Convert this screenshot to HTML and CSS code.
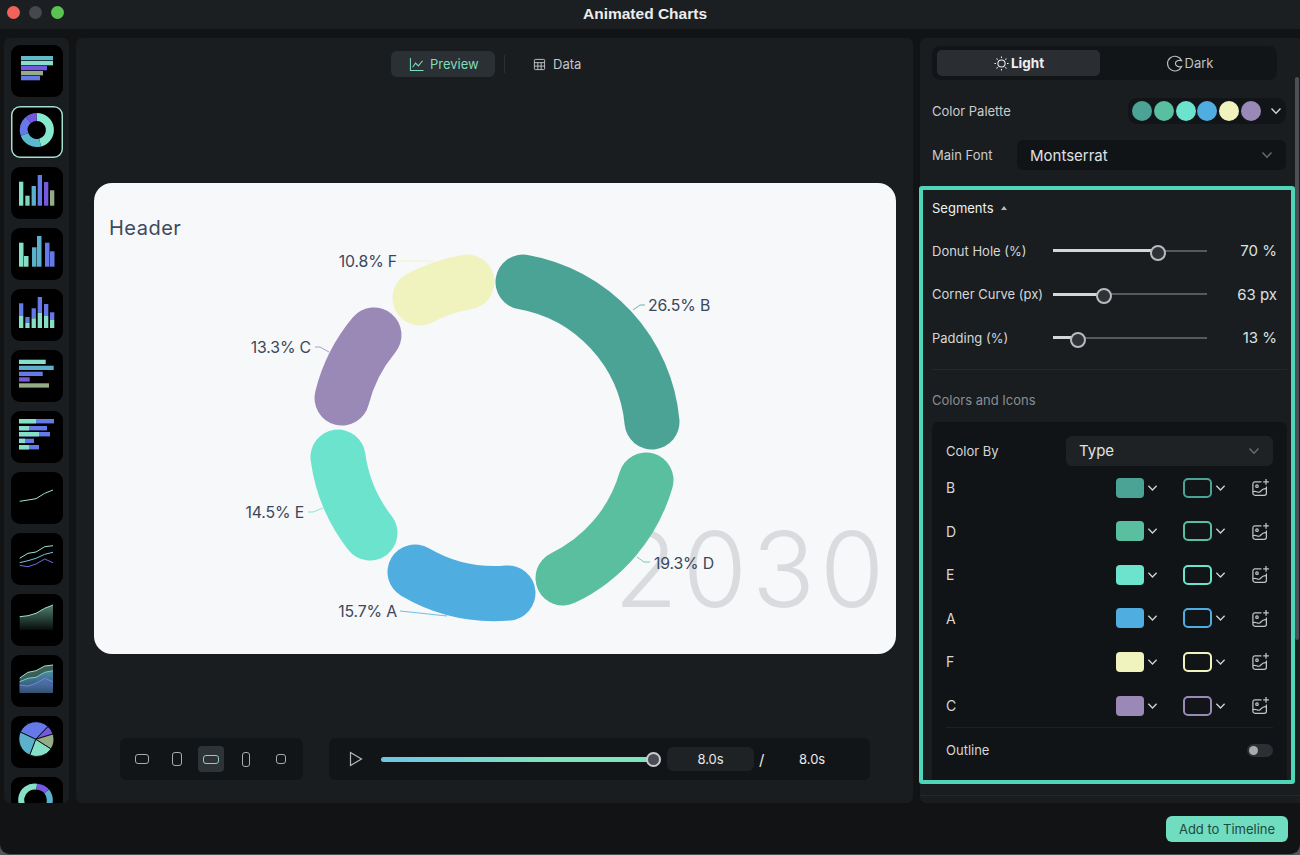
FILE: index.html
```html
<!DOCTYPE html>
<html lang="en">
<head>
<meta charset="utf-8">
<title>Animated Charts</title>
<link rel="stylesheet" href="styles.css">
</head>
<body>
<svg class="defs" aria-hidden="true">
  <symbol id="chev" viewBox="0 0 12 8"><path d="M1.5 1.5L6 6.2L10.5 1.5" fill="none" stroke="currentColor" stroke-width="1.4"/></symbol>
  <symbol id="addimg" viewBox="0 0 20 20"><g fill="none" stroke="currentColor" stroke-width="1.3"><path d="M11 4H4.2A2.2 2.2 0 0 0 2 6.2V16A2.2 2.2 0 0 0 4.2 18.2H14A2.2 2.2 0 0 0 16.2 16V9"/><path d="M15.8 1V7M12.8 4H18.8"/><circle cx="6.3" cy="8.6" r="1.3"/><path d="M2 14.5C5 12.5 7 16.5 9.5 14.5C11.5 12.5 13 10.5 16.2 11.5"/></g></symbol>
</svg>
<div class="app">
  <header class="titlebar">
    <div class="lights"><span class="light red"></span><span class="light grey"></span><span class="light green"></span></div>
    <div class="apptitle">Animated Charts</div>
  </header>
  <div class="workspace">
    <aside class="sidebar">
      <div class="thumb"><svg viewBox="0 0 52 52"><rect x="10" y="11" width="32" height="4.3" fill="#62b9c9"/><rect x="10" y="16" width="32" height="4.3" fill="#86e0c8"/><rect x="10" y="21" width="26" height="4.3" fill="#7558e0"/><rect x="10" y="26" width="22" height="4.3" fill="#94ad86"/><rect x="10" y="31" width="19" height="4.3" fill="#6679e8"/></svg></div>
      <div class="thumb selected"><svg viewBox="0 0 52 52"><g fill="none" stroke-width="8"><path d="M25.7 11A13 13 0 0 1 29.1 36.6" stroke="#86e8cc"/><path d="M29.1 36.6A13 13 0 0 1 13.5 28.4" stroke="#5bb9cf"/><path d="M13.5 28.4A13 13 0 0 1 17.3 14" stroke="#6679e8"/><path d="M17.3 14A13 13 0 0 1 25.7 11" stroke="#7558e0"/></g></svg></div>
      <div class="thumb"><svg viewBox="0 0 52 52"><rect x="8" y="14.7" width="4.3" height="24" fill="#86e0c8"/><rect x="14.3" y="28.7" width="4.3" height="10" fill="#7fd6b8"/><rect x="20.6" y="19" width="4.3" height="19.7" fill="#5bb0cc"/><rect x="26.7" y="8" width="4.3" height="30.7" fill="#6679e8"/><rect x="33" y="15" width="4.3" height="23.7" fill="#7558e0"/><rect x="39" y="23.3" width="4.3" height="15.4" fill="#94ad86"/></svg></div>
      <div class="thumb"><svg viewBox="0 0 52 52"><rect x="8" y="14.7" width="4.5" height="24" fill="#86e0c8"/><rect x="13" y="28" width="4.5" height="10.7" fill="#86e0c8"/><rect x="21" y="19.3" width="4.5" height="19.4" fill="#5bb0cc"/><rect x="26" y="8" width="4.5" height="30.7" fill="#5bb0cc"/><rect x="34" y="14.7" width="4.5" height="24" fill="#6679e8"/><rect x="39" y="23.3" width="4.5" height="15.4" fill="#6679e8"/></svg></div>
      <div class="thumb"><svg viewBox="0 0 52 52"><g fill="#6679e8"><rect x="8" y="14.3" width="4.3" height="12.7"/><rect x="14.3" y="28" width="4.3" height="5.7"/><rect x="20.6" y="19.3" width="4.3" height="10"/><rect x="26.7" y="8" width="4.3" height="15.7"/><rect x="33" y="15" width="4.3" height="12"/><rect x="39" y="23.3" width="4.3" height="7.7"/></g><g fill="#86e0c8"><rect x="8" y="27" width="4.3" height="12"/><rect x="14.3" y="33.7" width="4.3" height="5.3"/><rect x="20.6" y="29.3" width="4.3" height="9.7"/><rect x="26.7" y="23.7" width="4.3" height="15.3"/><rect x="33" y="27" width="4.3" height="12"/><rect x="39" y="31" width="4.3" height="8"/></g></svg></div>
      <div class="thumb"><svg viewBox="0 0 52 52"><rect x="8" y="9.7" width="26.7" height="4.3" fill="#86e0c8"/><rect x="8" y="15.7" width="34.7" height="4.3" fill="#5bb0cc"/><rect x="8" y="21.7" width="23.7" height="4.3" fill="#6679e8"/><rect x="8" y="27.3" width="10.7" height="4.3" fill="#7558e0"/><rect x="8" y="33.3" width="30" height="4.3" fill="#94ad86"/></svg></div>
      <div class="thumb"><svg viewBox="0 0 52 52"><g fill="#6679e8"><rect x="8" y="8" width="35" height="4.4"/><rect x="8" y="15" width="28" height="4.4"/><rect x="8" y="21" width="31" height="4.4"/><rect x="8" y="27.7" width="15" height="4.4"/><rect x="8" y="34" width="20" height="4.4"/></g><g fill="#86e0c8"><rect x="8" y="8" width="17" height="4.4"/><rect x="8" y="15" width="10" height="4.4"/><rect x="8" y="21" width="20" height="4.4"/><rect x="8" y="27.7" width="6" height="4.4"/><rect x="8" y="34" width="10" height="4.4"/></g></svg></div>
      <div class="thumb"><svg viewBox="0 0 52 52"><path d="M8.7 29.3L17 28L25 26.7L33.7 21.3L42 18" fill="none" stroke="#a5e0cc" stroke-width="1"/></svg></div>
      <div class="thumb"><svg viewBox="0 0 52 52"><g fill="none" stroke-width="1"><path d="M8.7 25.3L17 20.3L25 19L33.7 13.7L42 12.7" stroke="#9fe0cc"/><path d="M8.7 29.7L17 27.7L25 25.3L33.7 21.3L42 19.3" stroke="#7cc4dc"/><path d="M8.7 32.3L17 33.7L25 31L33.7 26L42 29.7" stroke="#6a6fe0"/></g></svg></div>
      <div class="thumb"><svg viewBox="0 0 52 52"><defs><linearGradient id="ga" x1="0" y1="0" x2="0" y2="1"><stop offset="0" stop-color="#4f7f70"/><stop offset="1" stop-color="#4f7f70" stop-opacity="0.1"/></linearGradient></defs><path d="M8.7 22.7L17 21.7L25 19.3L33.7 14.3L42 11V36H8.7Z" fill="url(#ga)"/><path d="M8.7 22.7L17 21.7L25 19.3L33.7 14.3L42 11" fill="none" stroke="#9fe0cc" stroke-width="1"/></svg></div>
      <div class="thumb"><svg viewBox="0 0 52 52"><defs><linearGradient id="gb" x1="0" y1="0" x2="0" y2="1"><stop offset="0" stop-color="#4d6fae"/><stop offset="1" stop-color="#4d6fae" stop-opacity="0.1"/></linearGradient><linearGradient id="gc" x1="0" y1="0" x2="0" y2="1"><stop offset="0" stop-color="#4b8ea5"/><stop offset="1" stop-color="#2e4a66"/></linearGradient></defs><path d="M8.7 23L17 17.3L25 15.7L33.7 11L42 10V38H8.7Z" fill="#3a5f55"/><path d="M8.7 26.7L17 23.3L25 22.3L33.7 17.3L42 15.7V38H8.7Z" fill="url(#gc)"/><path d="M8.7 30L17 31L25 28.3L33.7 23.3L42 26.7V38H8.7Z" fill="url(#gb)"/><g fill="none" stroke-width="1"><path d="M8.7 23L17 17.3L25 15.7L33.7 11L42 10" stroke="#9fe0cc"/><path d="M8.7 26.7L17 23.3L25 22.3L33.7 17.3L42 15.7" stroke="#7cc4dc"/><path d="M8.7 30L17 31L25 28.3L33.7 23.3L42 26.7" stroke="#7a7fe8"/></g></svg></div>
      <div class="thumb"><svg viewBox="0 0 52 52"><g stroke="#000" stroke-width="0.8"><path d="M24.7 23.3L9.3 16A17.3 17.3 0 0 1 37 10.5Z" fill="#6679e8"/><path d="M24.7 23.3L37 10.5A17.3 17.3 0 0 1 42 18Z" fill="#7558e0"/><path d="M24.7 23.3L42 18A17.3 17.3 0 0 1 40 33Z" fill="#94ad86"/><path d="M24.7 23.3L40 33A17.3 17.3 0 0 1 18.7 39Z" fill="#86e0c8"/><path d="M24.7 23.3L18.7 39A17.3 17.3 0 0 1 9.3 16Z" fill="#5bb0cc"/></g></svg></div>
      <div class="thumb"><svg viewBox="0 0 52 52"><g fill="none" stroke-width="6"><path d="M21.3 35.9A13 13 0 0 1 25.7 9.7" stroke="#86e0c8"/><path d="M25.7 9.7A14 14 0 0 1 35.7 14.3" stroke="#7558e0"/><path d="M35.7 14.3A14 14 0 0 1 32.2 35" stroke="#5bb0cc"/></g></svg></div>
    </aside>

    <main class="stage">
      <nav class="tabs">
        <div class="tab active"><svg class="tabicon" viewBox="0 0 16 16"><path d="M1.5 1V14.5H15.5M3.8 11L7 6.5L10 9.5L14.5 4" fill="none" stroke="currentColor" stroke-width="1.1"/></svg>Preview</div>
        <span class="tabdiv"></span>
        <div class="tab"><svg class="tabicon small" viewBox="0 0 14 14"><path d="M2.5 1.5H11.5A1 1 0 0 1 12.5 2.5V11.5A1 1 0 0 1 11.5 12.5H2.5A1 1 0 0 1 1.5 11.5V2.5A1 1 0 0 1 2.5 1.5ZM1.5 5H12.5M1.5 8.7H12.5M5.2 5V12.5M8.8 5V12.5" fill="none" stroke="currentColor" stroke-width="1"/></svg>Data</div>
      </nav>

      <section class="card">
        <svg class="chart" viewBox="0 0 802 471">
          <text class="year" x="520" y="424">2030</text>
          <text class="header" x="15" y="52">Header</text>
          <g fill="none" stroke-width="55" stroke-linecap="round">
            <path d="M429 99A157 157 0 0 1 558 239" stroke="#4ba396"/>
            <path d="M552 297A157 157 0 0 1 469 395" stroke="#5abf9e"/>
            <path d="M414 410A157 157 0 0 1 321 389" stroke="#4fade0"/>
            <path d="M276 350A157 157 0 0 1 244 274" stroke="#6be3cd"/>
            <path d="M248 215A157 157 0 0 1 280 152" stroke="#9a88b6"/>
            <path d="M326 115A157 157 0 0 1 373 99" stroke="#f0f3be"/>
          </g>
          <g fill="none" stroke-width="0.8">
            <path d="M539 127L546 122H551" stroke="#4ba396"/>
            <path d="M543 374L550 379H556" stroke="#5abf9e"/>
            <path d="M306 428L353 433" stroke="#4fade0"/>
            <path d="M214 329H219L229 325" stroke="#6be3cd"/>
            <path d="M221 164H226L235 169" stroke="#9a88b6"/>
            <path d="M303 78H339" stroke="#f0f3be"/>
          </g>
          <text class="label" x="554" y="128">26.5% B</text>
          <text class="label" x="560" y="386">19.3% D</text>
          <text class="label end" x="303" y="434">15.7% A</text>
          <text class="label end" x="210" y="335">14.5% E</text>
          <text class="label end" x="217" y="170">13.3% C</text>
          <text class="label end" x="303" y="84">10.8% F</text>
        </svg>
      </section>

      <div class="controls">
        <div class="ratios">
          <button class="ratio"><span class="rbox r1"></span></button>
          <button class="ratio"><span class="rbox r2"></span></button>
          <button class="ratio on"><span class="rbox r3"></span></button>
          <button class="ratio"><span class="rbox r4"></span></button>
          <button class="ratio"><span class="rbox r5"></span></button>
        </div>
        <div class="player">
          <svg class="play" viewBox="0 0 14 16"><path d="M1.5 1.5L12.5 8L1.5 14.5Z" fill="none" stroke="#b4b7ba" stroke-width="1.2"/></svg>
          <div class="timeline"><span class="timethumb"></span></div>
          <div class="timebox">8.0s</div>
          <span class="slash">/</span>
          <span class="timeend">8.0s</span>
        </div>
      </div>
    </main>

    <aside class="panel">
      <span class="scrollbar"></span>
      <div class="theme">
        <div class="mode on"><svg class="modeicon" viewBox="0 0 18 18"><g fill="none" stroke="currentColor" stroke-width="1.1"><circle cx="9" cy="9" r="3.8"/><path d="M9 1.5V3.2M9 14.8V16.5M1.5 9H3.2M14.8 9H16.5M3.7 3.7L4.9 4.9M13.1 13.1L14.3 14.3M3.7 14.3L4.9 13.1M13.1 4.9L14.3 3.7"/></g></svg>Light</div>
        <div class="mode"><svg class="modeicon" viewBox="0 0 18 18"><path d="M16.6 6A7.8 7.8 0 1 0 16.6 12.2C13.2 13.4 10 11.6 10 9C10 6.6 13 4.9 16.6 6Z" fill="none" stroke="currentColor" stroke-width="1.2"/></svg>Dark</div>
      </div>
      <div class="setting palette-row">
        <span>Color Palette</span>
        <div class="palette">
          <i class="dot c-b"></i><i class="dot c-d"></i><i class="dot c-e"></i><i class="dot c-a"></i><i class="dot c-f"></i><i class="dot c-c"></i>
          <svg class="chev bright"><use href="#chev"/></svg>
        </div>
      </div>
      <div class="setting font-row">
        <span>Main Font</span>
        <div class="select fontselect">Montserrat<svg class="chev dim"><use href="#chev"/></svg></div>
      </div>

      <section class="segments">
        <div class="seghead">Segments <span class="caret"></span></div>
        <div class="slider"><span class="slabel">Donut Hole (%)</span><div class="track"><span class="fill f70"></span></div><span class="sval">70 %</span></div>
        <div class="slider"><span class="slabel">Corner Curve (px)</span><div class="track"><span class="fill f33"></span></div><span class="sval">63 px</span></div>
        <div class="slider"><span class="slabel">Padding (%)</span><div class="track"><span class="fill f16"></span></div><span class="sval">13 %</span></div>
        <div class="rule"></div>
        <div class="subhead">Colors and Icons</div>
        <div class="colors">
          <div class="colorby"><span>Color By</span><div class="select typeselect">Type<svg class="chev dim"><use href="#chev"/></svg></div></div>
          <div class="crow c-b"><span class="cname">B</span><i class="swatch"></i><svg class="chev bright"><use href="#chev"/></svg><i class="outline"></i><svg class="chev bright"><use href="#chev"/></svg><svg class="addimg"><use href="#addimg"/></svg></div>
          <div class="crow c-d"><span class="cname">D</span><i class="swatch"></i><svg class="chev bright"><use href="#chev"/></svg><i class="outline"></i><svg class="chev bright"><use href="#chev"/></svg><svg class="addimg"><use href="#addimg"/></svg></div>
          <div class="crow c-e"><span class="cname">E</span><i class="swatch"></i><svg class="chev bright"><use href="#chev"/></svg><i class="outline"></i><svg class="chev bright"><use href="#chev"/></svg><svg class="addimg"><use href="#addimg"/></svg></div>
          <div class="crow c-a"><span class="cname">A</span><i class="swatch"></i><svg class="chev bright"><use href="#chev"/></svg><i class="outline"></i><svg class="chev bright"><use href="#chev"/></svg><svg class="addimg"><use href="#addimg"/></svg></div>
          <div class="crow c-f"><span class="cname">F</span><i class="swatch"></i><svg class="chev bright"><use href="#chev"/></svg><i class="outline"></i><svg class="chev bright"><use href="#chev"/></svg><svg class="addimg"><use href="#addimg"/></svg></div>
          <div class="crow c-c"><span class="cname">C</span><i class="swatch"></i><svg class="chev bright"><use href="#chev"/></svg><i class="outline"></i><svg class="chev bright"><use href="#chev"/></svg><svg class="addimg"><use href="#addimg"/></svg></div>
          <div class="outlinerow"><span>Outline</span><span class="toggle"><i></i></span></div>
        </div>
      </section>
      <div class="panelrule"></div>
    </aside>
  </div>
  <footer class="footer"><button class="addbtn">Add to Timeline</button></footer>
</div>
</body>
</html>
```

FILE: styles.css
```css
* { box-sizing: border-box; }
html, body { margin: 0; padding: 0; }
body {
  width: 1300px; height: 855px; overflow: hidden; background: #55585b;
  font-family: "Inter", "Liberation Sans", sans-serif; font-size: 13px; color: #c9cccf;
}
.defs { display: none; }
.app {
  width: 1300px; height: 855px; background: #111315; display: flex; flex-direction: column;
  border-radius: 0 0 10px 10px; border-bottom: 1px solid #4a4d50; overflow: hidden;
}

/* title bar */
.titlebar { height: 29px; background: #1c1f22; position: relative; display: flex; align-items: center; justify-content: center; flex: none; padding-bottom: 2px; }
.lights { position: absolute; left: 7px; top: 6px; display: flex; gap: 9px; }
.light { width: 13px; height: 13px; border-radius: 50%; }
.red { background: #f0625a; } .grey { background: #45484c; } .green { background: #5ac451; }
.apptitle { font-family: "Liberation Sans", sans-serif; font-weight: 700; font-size: 15.5px; color: #eceded; margin-left: -10px; }

.workspace { display: flex; height: 765px; margin-top: 9px; padding-left: 4px; gap: 7px; flex: none; }

/* sidebar */
.sidebar { width: 65px; background: #191d20; border-radius: 6px; padding: 7px; display: flex; flex-direction: column; gap: 9px; overflow: hidden; flex: none; }
.thumb { width: 52px; height: 52px; background: #000; border-radius: 9px; flex: none; }
.thumb svg { display: block; width: 52px; height: 52px; }
.thumb.selected { box-shadow: inset 0 0 0 1.5px #a5dccb; }

/* stage */
.stage { width: 837px; background: #191d20; border-radius: 6px; flex: none; display: flex; flex-direction: column; }
.tabs { display: flex; align-items: center; margin: 13px 0 0 315px; height: 26px; }
.tab { display: flex; align-items: center; height: 26px; color: #c4c7ca; font-size: 13px; gap: 7px; }
.tab.active { width: 104px; padding-left: 18px; background: #2b3034; border-radius: 6px; color: #7fdcbc; gap: 6px; }
.tabicon { width: 15px; height: 15px; }
.tabicon.small { width: 13px; height: 13px; }
.tabdiv { width: 1px; height: 18px; background: #2c3034; margin: 0 28px 0 9px; }

.card { width: 802px; height: 471px; margin: 106px 0 0 18px; background: #f6f8fa; border-radius: 18px; overflow: hidden; flex: none; }
.chart { display: block; width: 802px; height: 471px; }
.chart text { font-family: "Inter", "Liberation Sans", sans-serif; }
.header { font-size: 20px; letter-spacing: 0.5px; fill: #3d4a5c; }
.year { font-size: 104px; font-weight: 300; fill: #d9dbde; letter-spacing: 5px; }
.label { font-size: 15.8px; fill: #3c475a; letter-spacing: -0.15px; }
.label.end { text-anchor: end; }

.controls { display: flex; gap: 26px; margin: 84px 0 0 44px; }
.ratios { width: 183px; height: 42px; background: #121518; border-radius: 6px; display: flex; align-items: center; gap: 8.7px; padding-left: 9px; }
.ratio { width: 26px; height: 26px; border: 0; padding: 0; background: none; border-radius: 4px; display: flex; align-items: center; justify-content: center; }
.ratio.on { background: #2e3337; }
.rbox { display: block; border: 1.5px solid #a8acb0; border-radius: 3px; }
.r1 { width: 14px; height: 10px; }
.r2 { width: 10px; height: 14px; }
.r3 { width: 16px; height: 9px; border-color: #8fcdb8; }
.r4 { width: 8px; height: 15px; }
.r5 { width: 10px; height: 10px; }

.player { width: 541px; height: 42px; background: #121518; border-radius: 6px; display: flex; align-items: center; padding-left: 20px; }
.play { width: 14px; height: 16px; flex: none; }
.timeline { width: 273px; height: 5px; margin-left: 18px; border-radius: 3px; background: linear-gradient(90deg, #6cc5e8, #7fe3bd 60%); position: relative; flex: none; }
.timethumb { position: absolute; right: -7px; top: -5px; width: 15px; height: 15px; border-radius: 50%; background: #4a4d55; border: 2px solid #c8ccce; }
.timebox { width: 87px; height: 24px; margin-left: 13px; background: #1e2225; border-radius: 6px; display: flex; align-items: center; justify-content: center; color: #e8e9ea; font-size: 13px; flex: none; }
.slash { margin-left: 5px; color: #e8e9ea; font-size: 15px; width: 8px; }
.timeend { margin-left: 32px; color: #e8e9ea; font-size: 13px; }

/* right panel */
.panel { width: 380px; background: #191d20; border-radius: 6px 0 0 6px; padding: 8px 0 0 12px; flex: none; position: relative; }
.scrollbar { position: absolute; right: 1px; top: 39px; width: 4px; height: 563px; background: #4c5054; border-radius: 2px; }
.theme { width: 345px; height: 34px; background: #121518; border-radius: 8px; padding: 4px 4px 4px 5px; display: flex; }
.mode { flex: 1; height: 26px; display: flex; align-items: center; justify-content: center; gap: 2px; color: #bfc2c5; font-size: 13px; border-radius: 5px; padding-left: 6px; }
.mode.on { flex: none; width: 163px; background: #2a2e33; color: #f0f0f0; font-weight: 700; font-size: 13.5px; gap: 1px; padding-left: 0; }
.modeicon { width: 17px; height: 17px; }
.setting { display: flex; align-items: center; justify-content: space-between; width: 354px; }
.palette-row { margin-top: 18px; height: 26px; }
.palette { width: 158px; height: 26px; background: #121518; border-radius: 9px; display: flex; align-items: center; padding-left: 4px; gap: 1.8px; }
.dot { width: 20px; height: 20px; border-radius: 50%; background: var(--c); flex: none; }
.palette .chev { margin-left: 7px; }
.font-row { margin-top: 16px; height: 30px; }
.select { display: flex; align-items: center; justify-content: space-between; border-radius: 6px; font-size: 15px; color: #e0e1e2; }
.fontselect { width: 269px; height: 30px; background: #111417; padding: 0 13px; }
.chev { width: 12px; height: 8px; flex: none; }
.chev.bright { color: #d0d2d4; }
.chev.dim { color: #6a6d70; }

.c-b { --c: #4ba396; } .c-d { --c: #5abf9e; } .c-e { --c: #6be3cd; }
.c-a { --c: #4fade0; } .c-f { --c: #f0f3be; } .c-c { --c: #9a88b6; }

.segments { width: 376px; height: 598px; margin: 16px 0 0 -13px; border: 4px solid #4fd6b8; border-radius: 3px; padding-left: 9px; }
.seghead { height: 39px; display: flex; align-items: center; gap: 7px; color: #eff0f0; font-size: 13px; padding-bottom: 4px; }
.caret { width: 0; height: 0; border-left: 3px solid transparent; border-right: 3px solid transparent; border-bottom: 4px solid #b5b7b9; }
.slider { height: 43.6px; display: flex; align-items: center; }
.slabel { width: 121px; flex: none; color: #d5d7d9; }
.track { width: 154px; height: 2px; background: #55585c; position: relative; flex: none; }
.fill { position: absolute; left: 0; top: -0.5px; height: 3px; background: #d4d6d8; }
.fill::after { content: ""; position: absolute; right: -6px; top: -4.5px; width: 12px; height: 12px; border-radius: 50%; background: #2f3236; border: 2px solid #b8bbbd; }
.f70 { width: 106.5px; } .f33 { width: 52.5px; } .f16 { width: 26.5px; }
.sval { margin-left: auto; margin-right: 14px; font-size: 15px; color: #dfe0e1; }
.rule { height: 1px; background: #24282b; margin: 9px 4px 0 0; }
.subhead { height: 52px; padding-top: 22px; line-height: 16px; color: #8a8d90; }
.colors { width: 355px; height: 358px; background: #111417; padding: 14px 14px 0 14px; border-radius: 6px 6px 0 0; }
.colorby { display: flex; align-items: center; justify-content: space-between; height: 30px; color: #d5d7d9; }
.typeselect { width: 207px; height: 30px; background: #1f2225; padding: 0 13px; }
.crow { height: 43.6px; display: flex; align-items: center; color: #d5d7d9; font-size: 14px; }
.cname { width: 170px; flex: none; }
.swatch { width: 28px; height: 20px; border-radius: 4px; background: var(--c); flex: none; }
.crow .chev { margin-left: 3px; width: 11px; }
.outline { width: 29px; height: 20px; border-radius: 5px; border: 2px solid var(--c); background: #121518; margin-left: 25px; flex: none; }
.addimg { width: 19px; height: 19px; color: #c2c5c7; margin-left: 25px; flex: none; }
.outlinerow { border-top: 1px solid #1c2023; height: 45px; display: flex; align-items: center; justify-content: space-between; color: #d5d7d9; }
.toggle { width: 26px; height: 13px; border-radius: 7px; background: #2c2f33; display: flex; align-items: center; padding-left: 2px; }
.toggle i { width: 9px; height: 9px; border-radius: 50%; background: #a8aaac; }
.panelrule { height: 1px; background: #24282b; margin: 11px 0 0 -12px; }

/* footer */
.footer { flex: 1; display: flex; justify-content: flex-end; padding: 13px 12px 0 0; }
.addbtn { width: 122px; height: 26px; border: 0; border-radius: 6px; background: #70dcc0; color: #1d4a40; font-family: "Inter", "Liberation Sans", sans-serif; font-size: 13px; padding: 0; }
```
